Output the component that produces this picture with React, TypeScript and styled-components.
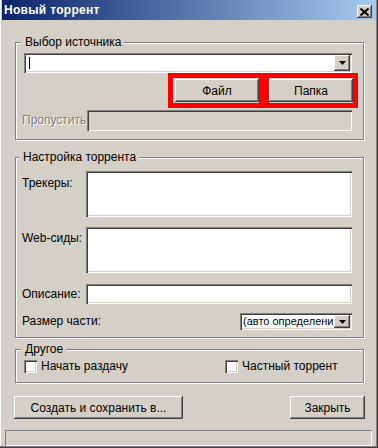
import styled, { createGlobalStyle } from 'styled-components';

const GlobalStyle = createGlobalStyle`
  html, body {
    margin: 0;
    padding: 0;
    background: #d4d0c8;
  }
  body {
    font-family: "Liberation Sans", Arial, sans-serif;
    font-size: 11px;
    color: #000;
  }
`;

const sunken = `
  box-shadow: inset 1px 1px #808080, inset 2px 2px #404040,
    inset -1px -1px #ffffff, inset -2px -2px #d4d0c8;
`;

const raised = `
  box-shadow: inset -1px -1px #404040, inset 1px 1px #ffffff,
    inset -2px -2px #808080;
`;

const Window = styled.div`
  width: 378px;
  height: 448px;
  box-sizing: border-box;
  padding: 0 2px 2px 2px;
  background: #d4d0c8;
  display: flex;
  flex-direction: column;
  box-shadow: inset -1px -1px #404040, inset -2px -2px #808080, inset 1px 0 #ffffff;
`;

const TitleBar = styled.div`
  height: 20px;
  flex: none;
  display: flex;
  align-items: flex-start;
  justify-content: space-between;
  padding: 0 4px 0 2px;
  background: linear-gradient(to right, #0a246a, #a6caf0);
`;

const Title = styled.span`
  color: #fff;
  font-weight: bold;
  font-size: 12px;
  line-height: 20px;
  letter-spacing: 0.3px;
`;

const CloseButton = styled.div`
  width: 15px;
  height: 13px;
  margin-top: 5px;
  background: #d4d0c8;
  display: flex;
  align-items: center;
  justify-content: center;
  ${raised}
`;

const Body = styled.div`
  flex: 1;
  display: flex;
  flex-direction: column;
  padding: 0 12px 0 13px;
`;

const Group = styled.fieldset<{ $top: number; $pad: string }>`
  margin: ${({ $top }) => $top}px 0 0 0;
  padding: ${({ $pad }) => $pad};
  min-width: 0;
  border: 1px solid #808080;
  box-shadow: inset 1px 1px #ffffff, 1px 1px #ffffff;
  display: flex;
  flex-direction: column;
`;

const Legend = styled.legend`
  margin-left: -3px;
  padding: 0 3px 0 4px;
  line-height: 13px;
  font-size: 12px;
  background: #d4d0c8;
`;

const Combo = styled.div<{ $h: number; $w?: number }>`
  height: ${({ $h }) => $h}px;
  width: ${({ $w }) => ($w ? `${$w}px` : 'auto')};
  box-sizing: border-box;
  background: #fff;
  display: flex;
  align-items: center;
  padding: 2px;
  ${sunken}
`;

const ComboText = styled.span`
  flex: 1;
  white-space: nowrap;
  overflow: hidden;
  padding-left: 1px;
  line-height: 13px;
  font-size: 11px;
`;

const Caret = styled.span`
  width: 1px;
  height: 12px;
  margin-left: 3px;
  background: #000;
`;

const ArrowButton = styled.div`
  width: 16px;
  flex: none;
  align-self: stretch;
  margin-left: auto;
  background: #d4d0c8;
  display: flex;
  align-items: center;
  justify-content: center;
  ${raised}
`;

const HighlightRow = styled.div`
  display: flex;
  justify-content: flex-end;
  margin-right: -6px;
`;

const Highlight = styled.div<{ $pad: string }>`
  border: 5px solid #ff0000;
  padding: ${({ $pad }) => $pad};
  display: flex;
`;

const Button = styled.button<{ $w: number }>`
  width: ${({ $w }) => $w}px;
  height: 23px;
  border: none;
  margin: 0;
  padding: 0;
  background: #d4d0c8;
  font-family: inherit;
  font-size: 12px;
  color: #000;
  ${raised}
`;

const FieldRow = styled.div<{ $top: number; $align?: string; $shift?: number }>`
  display: flex;
  align-items: ${({ $align }) => $align || 'center'};
  margin-top: ${({ $top }) => $top}px;
  margin-left: ${({ $shift }) => $shift || 0}px;
`;

const FieldLabel = styled.span<{ $w: number; $dy?: number; $disabled?: boolean }>`
  width: ${({ $w }) => $w}px;
  flex: none;
  padding-top: ${({ $dy }) => $dy || 0}px;
  line-height: 13px;
  font-size: 12px;
  white-space: nowrap;
  color: ${({ $disabled }) => ($disabled ? '#808080' : '#000')};
  text-shadow: ${({ $disabled }) => ($disabled ? '1px 1px #ffffff' : 'none')};
`;

const TextBox = styled.div<{ $h: number; $disabled?: boolean }>`
  flex: 1;
  height: ${({ $h }) => $h}px;
  background: ${({ $disabled }) => ($disabled ? '#d4d0c8' : '#fff')};
  ${sunken}
`;

const Spread = styled.div`
  display: flex;
  align-items: center;
  justify-content: space-between;
  margin-top: 9px;
`;

const CheckRow = styled.div`
  display: grid;
  grid-template-columns: 201px auto;
`;

const CheckItem = styled.label`
  display: flex;
  align-items: center;
  gap: 4px;
  line-height: 13px;
  font-size: 12px;
`;

const CheckBox = styled.span`
  width: 13px;
  height: 13px;
  background: #fff;
  ${sunken}
`;

const ActionRow = styled.div`
  display: flex;
  justify-content: space-between;
  margin: 13px -1px 0 -1px;
`;

const StatusBar = styled.div`
  height: 16px;
  margin: 6px 4px 0 3px;
  box-shadow: inset 1px 1px #808080, inset -1px -1px #ffffff;
`;

function DownArrow() {
  return (
    <svg width="7" height="4" viewBox="0 0 7 4">
      <path d="M0 0 H7 L3.5 4 Z" fill="#000" />
    </svg>
  );
}

export default function App() {
  return (
    <>
      <GlobalStyle />
      <Window>
        <TitleBar>
          <Title>Новый торрент</Title>
          <CloseButton>
            <svg width="9" height="8" viewBox="0 0 9 8">
              <path d="M0.5 0.5 L8.5 7.5 M8.5 0.5 L0.5 7.5" stroke="#000" strokeWidth="2" />
            </svg>
          </CloseButton>
        </TitleBar>

        <Body>
          <Group $top={16} $pad="4px 11px 8px 8px">
            <Legend>Выбор источника</Legend>
            <Combo $h={20}>
              <Caret />
              <ArrowButton>
                <DownArrow />
              </ArrowButton>
            </Combo>
            <HighlightRow>
              <Highlight $pad="1px 0 1px 2px">
                <Button $w={84}>Файл</Button>
              </Highlight>
              <Highlight $pad="1px 0 1px 0">
                <Button $w={84}>Папка</Button>
              </Highlight>
            </HighlightRow>
            <FieldRow $top={2} $shift={-2}>
              <FieldLabel $w={65} $disabled>Пропустить</FieldLabel>
              <TextBox $h={21} $disabled />
            </FieldRow>
          </Group>

          <Group $top={11} $pad="7px 11px 7px 6px">
            <Legend>Настройка торрента</Legend>
            <FieldRow $top={0} $align="flex-start">
              <FieldLabel $w={64} $dy={6}>Трекеры:</FieldLabel>
              <TextBox $h={46} />
            </FieldRow>
            <FieldRow $top={10} $align="flex-start">
              <FieldLabel $w={64} $dy={5}>Web-сиды:</FieldLabel>
              <TextBox $h={46} />
            </FieldRow>
            <FieldRow $top={11}>
              <FieldLabel $w={64}>Описание:</FieldLabel>
              <TextBox $h={20} />
            </FieldRow>
            <Spread>
              <FieldLabel $w={100}>Размер части:</FieldLabel>
              <Combo $h={17} $w={112}>
                <ComboText>(авто определени</ComboText>
                <ArrowButton>
                  <DownArrow />
                </ArrowButton>
              </Combo>
            </Spread>
          </Group>

          <Group $top={5} $pad="4px 11px 9px 8px">
            <Legend>Другое</Legend>
            <CheckRow>
              <CheckItem>
                <CheckBox />
                Начать раздачу
              </CheckItem>
              <CheckItem>
                <CheckBox />
                Частный торрент
              </CheckItem>
            </CheckRow>
          </Group>

          <ActionRow>
            <Button $w={169}>Создать и сохранить в...</Button>
            <Button $w={75}>Закрыть</Button>
          </ActionRow>
        </Body>

        <StatusBar />
      </Window>
    </>
  );
}
